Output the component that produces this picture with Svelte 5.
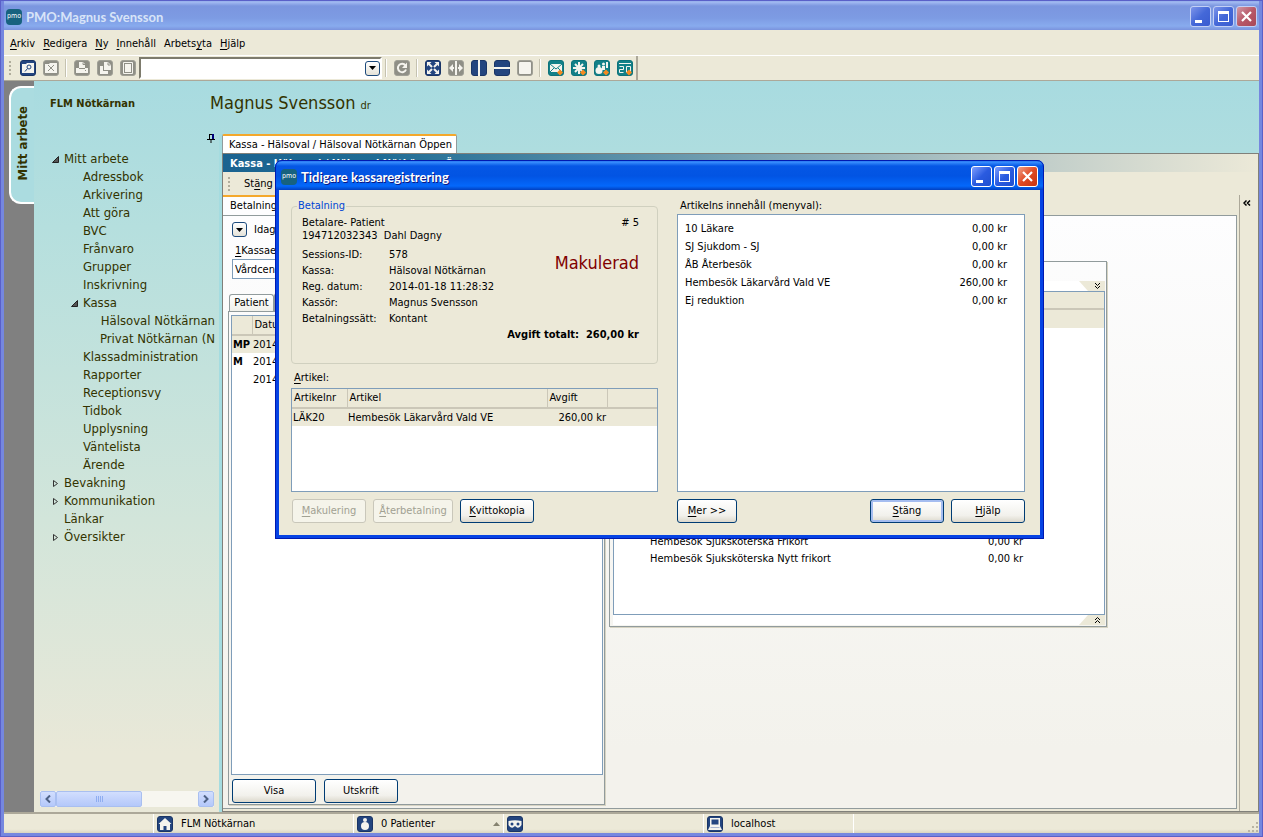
<script lang="ts">
  interface TreeNode {
    label: string;
    level: number;
    state?: "open" | "closed";
  }

  const tree: TreeNode[] = [
    { label: "Mitt arbete", level: 0, state: "open" },
    { label: "Adressbok", level: 1 },
    { label: "Arkivering", level: 1 },
    { label: "Att göra", level: 1 },
    { label: "BVC", level: 1 },
    { label: "Frånvaro", level: 1 },
    { label: "Grupper", level: 1 },
    { label: "Inskrivning", level: 1 },
    { label: "Kassa", level: 1, state: "open" },
    { label: "Hälsoval Nötkärnan", level: 2 },
    { label: "Privat Nötkärnan (N", level: 2 },
    { label: "Klassadministration", level: 1 },
    { label: "Rapporter", level: 1 },
    { label: "Receptionsvy", level: 1 },
    { label: "Tidbok", level: 1 },
    { label: "Upplysning", level: 1 },
    { label: "Väntelista", level: 1 },
    { label: "Ärende", level: 1 },
    { label: "Bevakning", level: 0, state: "closed" },
    { label: "Kommunikation", level: 0, state: "closed" },
    { label: "Länkar", level: 0 },
    { label: "Översikter", level: 0, state: "closed" },
  ];

  // [before, access key, after]
  const menus = [
    ["", "A", "rkiv"],
    ["", "R", "edigera"],
    ["", "N", "y"],
    ["", "I", "nnehåll"],
    ["Arbets", "y", "ta"],
    ["", "H", "jälp"],
  ];

  const details = [
    ["Sessions-ID:", "578"],
    ["Kassa:", "Hälsoval Nötkärnan"],
    ["Reg. datum:", "2014-01-18 11:28:32"],
    ["Kassör:", "Magnus Svensson"],
    ["Betalningssätt:", "Kontant"],
  ];

  const contents = [
    ["10 Läkare", "0,00 kr"],
    ["SJ Sjukdom - SJ", "0,00 kr"],
    ["ÅB Återbesök", "0,00 kr"],
    ["Hembesök Läkarvård Vald VE", "260,00 kr"],
    ["Ej reduktion", "0,00 kr"],
  ];

  let search = $state("");
  let enhet = $state("Vårdcent");
</script>

{#snippet icon(name: string, tone: string)}
  <svg class="icon {tone}" viewBox="0 0 16 16" width="16" height="16" aria-hidden="true">
    <rect class="base" x="0.5" y="0.5" width="15" height="15" rx="2.5" />
    {#if name === "search"}
      <path class="fill" d="M2 4h4l1 -1h7v10H2z" />
      <circle class="ink" cx="9" cy="7" r="2" />
      <path class="ink" d="M7.500 8.500L5 11.500" />
    {:else if name === "close"}
      <path class="fill" d="M2 4h4l1 -1h7v10H2z" />
      <path class="ink" d="M5 5l6 6M11 5l-6 6" />
    {:else if name === "print"}
      <path class="fill" d="M5 2h4l2 2v4h3v5H2V8h3z" />
      <path class="ink" d="M5 8.5h6M9 2.5v2h2M11 10.5h1" />
    {:else if name === "copy"}
      <path class="fill" d="M7 2h4l3 3v5H7zM3 6h3v5h5v3H3z" />
      <path class="ink" d="M11 2.5v2.5h2.5" />
    {:else if name === "page"}
      <path class="line" d="M3.5 2.5h9v11h-9z" />
      <path class="fill" d="M5 4h6v8H5z" />
    {:else if name === "reload"}
      <path class="bold" d="M11.5 5.5A4.2 4.2 0 1 0 12 9.500" />
      <path class="fill" d="M13 2.500v5.500H8z" />
    {:else if name === "expand"}
      <path class="bold" d="M4 4l8 8M12 4l-8 8" />
      <path class="fill" d="M2 2h4.500L2 6.500zM14 2v4.500L9.500 2zM2 14V9.500L6.500 14zM14 14H9.500L14 9.500z" />
      <path class="knock" d="M8 6l2 2l-2 2l-2 -2z" />
    {:else if name === "width"}
      <path class="bold" d="M3 8h10" />
      <path class="fill" d="M1 8l4 -4v8zM15 8l-4 -4v8z" />
      <path class="knock" d="M6 1h4v14H6z" />
      <path class="bold" d="M8 1v14" />
    {:else if name === "columns"}
      <path class="bold" d="M8 0v16" />
    {:else if name === "rows"}
      <path class="bold" d="M0 8h16" />
    {:else if name === "single"}
      <rect class="fill" x="2" y="2" width="12" height="12" rx="1" />
    {:else if name === "mail"}
      <path class="fill" d="M2 4h12v8H2z" />
      <path class="ink" d="M2 4l6 5l6 -5M2 12l4 -4M14 12l-4 -4" />
    {:else if name === "star"}
      <path class="bold" d="M8 2v12M2 8h12M4 4l8 8M12 4l-8 8" />
    {:else if name === "people"}
      <circle class="fill" cx="5" cy="10.500" r="3.500" />
      <circle class="fill" cx="5" cy="6" r="1.500" />
      <circle class="fill" cx="9.500" cy="4" r="1.500" />
      <path class="fill" d="M8 6h3v4H8zM12 2h2v6h-2z" />
    {:else if name === "calendar"}
      <path class="line" d="M2 3.500h12M2.500 6.500h4v3h-4v3h4M9.500 12.500v-6h4v6" />
    {:else if name === "home"}
      <path class="fill" d="M8 2l6.500 6H13v6H9.500v-4h-3v4H3V8H1.500z" />
    {:else if name === "person"}
      <circle class="fill" cx="8" cy="4" r="2" />
      <circle class="fill" cx="8" cy="10" r="4" />
    {:else if name === "mask"}
      <path class="fill" d="M1.500 5q6.500 -1.500 13 0v4q-2 3.500 -4.500 2.500l-2 -1.500l-2 1.500q-2.500 1 -4.500 -2.500z" />
      <circle class="knock" cx="5" cy="8" r="1.500" />
      <circle class="knock" cx="11" cy="8" r="1.500" />
    {:else if name === "computer"}
      <path class="fill" d="M3 2h10v8l2 4H1l2 -4z" />
      <path class="knock" d="M4.500 3.500h7v5h-7z" />
      <path class="shade" d="M3.500 11.500h9" />
    {/if}
    {#if tone === "teal"}
      <path class="badge" d="M12 9.500l3 3l-3 3l-3 -3z" />
    {/if}
  </svg>
{/snippet}

{#snippet tool(name: string, tone: string, label: string)}
  <button class="tool" aria-label={label}>{@render icon(name, tone)}</button>
{/snippet}

{#snippet logo()}
  <svg class="logo" viewBox="0 0 16 16" width="16" height="16" aria-hidden="true">
    <rect width="16" height="16" rx="4" fill="#17627f" />
    <text x="8" y="9" text-anchor="middle" font-size="7" fill="#fff">pmo</text>
  </svg>
{/snippet}

{#snippet windowButtons()}
  <div class="window-buttons">
    <button class="win" aria-label="Minimera">
      <svg viewBox="0 0 21 21"><path d="M5 14h7v3H5z" fill="#fff" /></svg>
    </button>
    <button class="win" aria-label="Maximera">
      <svg viewBox="0 0 21 21"><path d="M5 5h11v11H5zM6 8v7h9V8z" fill="#fff" fill-rule="evenodd" /></svg>
    </button>
    <button class="win close" aria-label="Stäng fönster">
      <svg viewBox="0 0 21 21"><path d="M6 6l9 9M15 6l-9 9" stroke="#fff" stroke-width="2.200" /></svg>
    </button>
  </div>
{/snippet}

{#snippet down()}
  <svg viewBox="0 0 7 4" width="7" height="4" aria-hidden="true"><path d="M0 0h7L3.500 4z" fill="#000" /></svg>
{/snippet}

<div class="window">
  <header class="titlebar">
    {@render logo()}
    <h1>PMO:Magnus Svensson</h1>
    {@render windowButtons()}
  </header>

  <nav class="menubar">
    {#each menus as [before, key, after]}
      <a href="#menu">{before}<u>{key}</u>{after}</a>
    {/each}
  </nav>

  <div class="toolbar-row">
    <div class="toolbar">
      <span class="grip"></span>
      {@render tool("search", "navy", "Sök")}
      {@render tool("close", "gray", "Stäng")}
      <span class="sep"></span>
      {@render tool("print", "gray", "Skriv ut")}
      {@render tool("copy", "gray", "Kopiera")}
      {@render tool("page", "gray", "Sida")}
      <div class="combo">
        <input aria-label="Sök" bind:value={search} />
        <button class="drop" aria-label="Visa lista">{@render down()}</button>
      </div>
      <span class="sep"></span>
      {@render tool("reload", "gray", "Uppdatera")}
      <span class="sep"></span>
      {@render tool("expand", "navy", "Expandera")}
      {@render tool("width", "gray", "Bredd")}
      {@render tool("columns", "navy", "Kolumner")}
      {@render tool("rows", "navy", "Rader")}
      {@render tool("single", "gray", "En vy")}
      <span class="sep"></span>
      {@render tool("mail", "teal", "Nytt meddelande")}
      {@render tool("star", "teal", "Ny notering")}
      {@render tool("people", "teal", "Ny grupp")}
      {@render tool("calendar", "teal", "Ny bokning")}
    </div>
  </div>

  <div class="workspace">
    <div class="strip">
      <button class="side-tab"><span>Mitt arbete</span></button>
    </div>

    <div class="main">
      <div class="user-header">
        <strong>FLM Nötkärnan</strong>
        <span class="user">Magnus Svensson <small>dr</small></span>
      </div>

      <div class="columns">
        <nav class="sidebar">
          <div class="pin-row">
            <svg viewBox="0 0 8 9" width="8" height="9" aria-hidden="true">
              <path d="M2 0.500h4M2.500 0v5M0 5.500h8M4 5v4" stroke="#000" fill="none" />
              <path d="M5 0h2v5H5z" fill="#00007a" />
            </svg>
          </div>
          <ul class="tree">
            {#each tree as node}
              <li class="level-{node.level}">
                <span class="arrow">
                  {#if node.state === "open"}
                    <svg viewBox="0 0 7 7" width="7" height="7"><path d="M6.500 0.500v6h-6z" fill="#555" stroke="#222" /></svg>
                  {:else if node.state === "closed"}
                    <svg viewBox="0 0 7 7" width="7" height="7"><path d="M1.500 0.500l4 3l-4 3z" fill="none" stroke="#333" /></svg>
                  {/if}
                </span>
                <a href="#{node.label}">{node.label}</a>
              </li>
            {/each}
          </ul>
          <div class="hscroll">
            <button aria-label="Rulla vänster"><svg viewBox="0 0 6 8" width="6" height="8"><path d="M5 0.500L1.500 4L5 7.500" /></svg></button>
            <span class="thumb"><i></i><i></i><i></i><i></i></span>
            <span class="track"></span>
            <button aria-label="Rulla höger"><svg viewBox="0 0 6 8" width="6" height="8"><path d="M1 0.500L4.500 4L1 7.500" /></svg></button>
          </div>
        </nav>

        <div class="content">
          <button class="doc-tab">Kassa - Hälsoval / Hälsoval Nötkärnan Öppen</button>
          <section class="doc">
            <h2>Kassa - Hälsoval / Hälsoval Nötkärnan Öppen</h2>
            <div class="doc-row">
              <div class="doc-main">
                <div class="doc-toolbar">
                  <span class="grip"></span>
                  <button>St<u>ä</u>ng</button>
                </div>
                <div class="page-tabs"><button>Betalning</button></div>
                <div class="page">
                  <div class="payments">
                    <div class="filter">
                      <button class="drop" aria-label="Välj period">{@render down()}</button>
                      <span>Idag</span>
                    </div>
                    <label for="enhet"><u>1</u>Kassae</label>
                    <input id="enhet" bind:value={enhet} />
                    <div class="sub-tabs">
                      <button>Patient</button>
                      <button class="active" aria-label="Dag"></button>
                    </div>
                    <div class="sub-panel">
                      <div class="list">
                        <table>
                          <thead><tr><th class="mark"></th><th>Datu</th></tr></thead>
                          <tbody>
                            <tr class="selected"><td class="mark">MP</td><td>2014</td></tr>
                            <tr><td class="mark">M</td><td>2014</td></tr>
                            <tr><td class="mark"></td><td>2014</td></tr>
                          </tbody>
                        </table>
                      </div>
                      <div class="list-actions">
                        <button class="xp wide">Visa</button>
                        <button class="xp">Utskrift</button>
                      </div>
                    </div>
                  </div>

                  <div class="articles">
                    <div class="fold top">
                      <svg viewBox="0 0 28 10" width="28" height="10" aria-hidden="true">
                        <path d="M2 0h26v10H11z" fill="#ece9d8" />
                        <path d="M18 2l2.500 2.500L23 2M18 5l2.500 2.500L23 5" fill="none" stroke="#000" />
                      </svg>
                    </div>
                    <div class="list">
                      <div class="list-head"></div>
                      <div class="list-selected"></div>
                      <dl>
                        <div><dt>Hembesök Sjuksköterska Frikort</dt><dd>0,00 kr</dd></div>
                        <div><dt>Hembesök Sjuksköterska Nytt frikort</dt><dd>0,00 kr</dd></div>
                      </dl>
                    </div>
                    <div class="fold">
                      <svg viewBox="0 0 28 10" width="28" height="10" aria-hidden="true">
                        <path d="M11 0h17v10H2z" fill="#ece9d8" />
                        <path d="M18 5l2.500 -2.500L23 5M18 8l2.500 -2.500L23 8" fill="none" stroke="#000" />
                      </svg>
                    </div>
                  </div>
                </div>
              </div>
              <aside class="collapsed">
                <button aria-label="Visa panel">
                  <svg viewBox="0 0 8 6" width="8" height="6" aria-hidden="true"><path d="M3.500 0.500L1 3l2.500 2.500M7 0.500L4.500 3L7 5.500" fill="none" stroke="#000" stroke-width="1.500" /></svg>
                </button>
              </aside>
            </div>
          </section>
        </div>
      </div>
    </div>
  </div>

  <footer class="statusbar">
    <span class="cell"></span>
    <span class="cell broad">{@render icon("home", "navy")}FLM Nötkärnan</span>
    <span class="cell">
      {@render icon("person", "navy")}0 Patienter
      <svg class="up" viewBox="0 0 7 4" width="7" height="4"><path d="M0 4h7L3.500 0z" fill="#85826f" /></svg>
    </span>
    <span class="cell broad">{@render icon("mask", "navy")}</span>
    <span class="cell">{@render icon("computer", "navy")}localhost</span>
    <span class="fill-cell">
      <svg viewBox="0 0 11 11" width="11" height="11" aria-hidden="true">
        <path d="M8 0h2v2H8zM4 4h2v2H4zM8 4h2v2H8zM0 8h2v2H0zM4 8h2v2H4zM8 8h2v2H8z" fill="#b8b4a2" />
      </svg>
    </span>
  </footer>

  <div class="dialog" role="dialog" aria-labelledby="dialog-title">
    <header class="titlebar active">
      {@render logo()}
      <h2 id="dialog-title">Tidigare kassaregistrering</h2>
      {@render windowButtons()}
    </header>
    <div class="dialog-body">
      <div class="left">
        <fieldset>
          <legend>Betalning</legend>
          <div class="payer">
            <p>Betalare- Patient<br />194712032343&nbsp; Dahl Dagny</p>
            <span class="number"># 5</span>
          </div>
          <div class="info">
            <dl>
              {#each details as [name, value]}
                <dt>{name}</dt>
                <dd>{value}</dd>
              {/each}
            </dl>
            <span class="voided">Makulerad</span>
          </div>
          <p class="total">Avgift totalt:&nbsp; 260,00 kr</p>
        </fieldset>
        <span class="caption" id="artikel"><u>A</u>rtikel:</span>
        <div class="list article-list">
          <table aria-labelledby="artikel">
            <thead>
              <tr><th class="nr">Artikelnr</th><th class="name">Artikel</th><th class="fee">Avgift</th><th></th></tr>
            </thead>
            <tbody>
              <tr class="selected"><td>LÄK20</td><td>Hembesök Läkarvård Vald VE</td><td class="amount">260,00 kr</td><td></td></tr>
            </tbody>
          </table>
        </div>
        <div class="buttons">
          <button class="xp" disabled><u>M</u>akulering</button>
          <button class="xp refund" disabled><u>Å</u>terbetalning</button>
          <button class="xp receipt"><u>K</u>vittokopia</button>
        </div>
      </div>
      <div class="right">
        <span class="caption">Artikelns innehåll (menyval):</span>
        <dl class="list contents">
          {#each contents as [name, price]}
            <div><dt>{name}</dt><dd>{price}</dd></div>
          {/each}
        </dl>
        <div class="buttons">
          <button class="xp more"><u>M</u>er &gt;&gt;</button>
          <button class="xp default"><u>S</u>täng</button>
          <button class="xp"><u>H</u>jälp</button>
        </div>
      </div>
    </div>
  </div>
</div>

<style>
  :global(body) { margin: 0; }

  * { box-sizing: border-box; }

  .window {
    position: relative;
    display: flex;
    flex-direction: column;
    min-height: 100vh;
    overflow: hidden;
    border: solid #7587df;
    border-width: 0 4px 4px;
    outline: 1px solid #5a60c8;
    outline-offset: -1px;
    background: #ece9d8;
    color: #000;
    font: 11px/14px Tahoma, "DejaVu Sans Condensed", "DejaVu Sans", sans-serif;
    white-space: nowrap;
  }

  h1, h2, p, dl, dd, ul { margin: 0; padding: 0; }
  a { color: inherit; text-decoration: none; }
  button, input { font: inherit; color: inherit; }
  button { border: 0; padding: 0; background: none; }
  u { text-underline-offset: 2px; }

  /* title bars */
  .titlebar {
    display: flex;
    align-items: center;
    gap: 4px;
    height: 30px;
    margin: 0 -4px;
    padding: 3px 6px 0;
    border-radius: 7px 7px 0 0;
    background: linear-gradient(#7a96df 0, #a3bbf2 2px, #7b96df 6px, #7d9be3 18px, #88abee 26px, #7a93dd 30px);
    color: #d8e4f8;
  }

  .titlebar.active {
    background: linear-gradient(#0a4bd8 0, #3a90ff 2px, #0557e5 6px, #0254e3 16px, #0468fb 26px, #0240c0 30px);
    color: #fff;
    text-shadow: 1px 1px #0a1883;
  }

  .titlebar h1, .titlebar h2 {
    flex: 1;
    font: 700 13px/18px "Trebuchet MS", Lato, sans-serif;
  }

  .logo { font-family: "DejaVu Sans Condensed", sans-serif; text-shadow: none; }
  .window-buttons { display: flex; gap: 2px; }

  .win {
    width: 21px;
    height: 21px;
    border: 1px solid #fff;
    border-radius: 3px;
    background: linear-gradient(135deg, #7f9fff, #2a5be0 50%, #1f4fd0);
  }

  .win svg { display: block; margin: -1px; width: 21px; height: 21px; }
  .win.close { background: linear-gradient(135deg, #f0a088, #e04a24 50%, #c83410); }
  .titlebar:not(.active) .win { border-color: #c3d0f5; background: linear-gradient(135deg, #7d95ea, #4468d8 50%, #3a5cd0); }
  .titlebar:not(.active) .win.close { background: linear-gradient(135deg, #d09aa8, #b85868 50%, #a84858); }

  /* menu and toolbar */
  .menubar {
    display: flex;
    gap: 8px;
    height: 25px;
    padding: 7px 6px 4px;
  }

  .toolbar-row { border-top: 1px solid #fff; border-bottom: 1px solid #aca899; }

  .toolbar {
    display: flex;
    align-items: center;
    width: fit-content;
    height: 24px;
    border-right: 2px solid #aca899;
  }

  .tool { display: grid; place-items: center; width: 23px; height: 23px; }
  .sep { width: 2px; height: 18px; margin: 0 3px; border-left: 1px solid #c5c2b0; border-right: 1px solid #fff; }

  .grip {
    width: 2px;
    height: 14px;
    margin: 0 5px;
    background: repeating-linear-gradient(#b0ad9c 0 2px, transparent 2px 4px);
  }

  .icon .base { fill: #23457f; stroke: #1a3566; }
  .icon.gray .base { fill: #8f8f86; stroke: #a0a096; }
  .icon.teal .base { fill: #128088; stroke: #0d737b; }
  .icon .fill { fill: #f5f4ee; }
  .icon .line { fill: none; stroke: #f5f4ee; }
  .icon .bold { fill: none; stroke: #f5f4ee; stroke-width: 2; }
  .icon .ink { fill: none; stroke: #23457f; }
  .icon.gray .ink { stroke: #8f8f86; }
  .icon.teal .ink { stroke: #128088; }
  .icon .knock { fill: #23457f; }
  .icon .shade { stroke: #a9b6cf; }
  .icon.gray .knock { fill: #8f8f86; }
  .icon .badge { fill: #f58a1f; }

  .combo {
    display: flex;
    align-items: center;
    width: 243px;
    height: 22px;
    border: 2px solid #fff;
    border-top-color: #7d7b6d;
    border-left-color: #7d7b6d;
    background: #fff;
  }

  .combo input { flex: 1; min-width: 0; border: 0; outline: 0; background: none; }

  .drop {
    display: grid;
    place-items: center;
    width: 15px;
    height: 15px;
    border: 1px solid #1c4a7c;
    border-radius: 3px;
    background: linear-gradient(#fff, #e4e2d8);
  }

  /* workspace */
  .workspace { display: flex; flex: 1; }
  .strip { width: 30px; padding: 5px 0 0 5px; background: #808080; }

  .side-tab {
    width: 25px;
    height: 118px;
    border: 2px solid #fff;
    border-right: 0;
    border-radius: 12px 0 0 12px;
    background: #abdce0;
    color: #333300;
    font-size: 13px;
    font-weight: 700;
  }

  .side-tab span { writing-mode: vertical-rl; transform: rotate(180deg); }

  .main {
    display: flex;
    flex: 1;
    flex-direction: column;
    min-width: 0;
    background: linear-gradient(#a8dbe0, #b5dfde 20%, #d2e5da 60%, #e9e8d8 92%);
  }

  .user-header {
    display: flex;
    align-items: center;
    height: 53px;
    padding: 0 0 7px 16px;
    color: #333300;
  }

  .user-header strong { width: 160px; font-size: 11px; }
  .user { font-size: 18px; line-height: 20px; }
  .user small { font-size: 11px; }

  .columns { display: flex; flex: 1; }

  .sidebar {
    display: flex;
    flex-direction: column;
    width: 188px;
    padding-left: 6px;
    border-right: 3px solid #a5dce0;
  }

  .pin-row { display: flex; justify-content: flex-end; height: 16px; padding-right: 4px; }
  .tree { flex: 1; margin-right: 4px; overflow: hidden; list-style: none; color: #333300; font-size: 13px; }
  .tree li { display: flex; height: 18px; line-height: 18px; padding-left: 12px; }
  .tree .level-1 { padding-left: 31px; }
  .tree .level-2 { padding-left: 50px; }
  .arrow { display: flex; align-items: center; width: 12px; }

  .hscroll { display: flex; height: 16px; margin: 0 5px 5px 0; background: #f7f6f0; }

  .hscroll button, .thumb {
    display: flex;
    align-items: center;
    justify-content: center;
    width: 16px;
    border: 1px solid #a9bff0;
    border-radius: 2px;
    background: linear-gradient(#d2defe, #b4c8fa);
  }

  .hscroll path { fill: none; stroke: #4d6185; stroke-width: 2; }
  .thumb { flex: 0 0 86px; gap: 1px; }
  .thumb i { width: 1px; height: 6px; background: #8fadf0; }
  .track { flex: 1; }

  .content { display: flex; flex: 1; flex-direction: column; align-items: flex-start; min-width: 0; }

  .doc-tab {
    height: 19px;
    padding: 0 4px 0 6px;
    border: 1px solid #919b9c;
    border-top: 2px solid #f4a82c;
    border-bottom: 0;
    border-radius: 2px 2px 0 0;
    background: #fff;
  }

  .doc {
    display: flex;
    flex: 1;
    flex-direction: column;
    align-self: stretch;
    border: 1px solid #80807a;
    background: #ece9d8;
  }

  .doc h2 {
    height: 18px;
    padding-left: 7px;
    background: linear-gradient(90deg, #1a6390, #1f6c95 15%, #c3cfca 80%, #ece9d8);
    color: #fff;
    font-size: 11px;
    line-height: 20px;
  }

  .doc-row { display: flex; flex: 1; }
  .doc-main { display: flex; flex: 1; flex-direction: column; min-width: 0; }
  .doc-toolbar { display: flex; align-items: center; gap: 9px; height: 23px; }
  .page-tabs { height: 20px; }

  .page-tabs button {
    height: 20px;
    padding: 0 7px;
    border-top: 2px solid #f4a82c;
    background: #fdfdfe;
  }

  .page {
    display: flex;
    flex: 1;
    gap: 4px;
    align-items: stretch;
    margin: 0 2px 2px 0;
    padding: 0 0 3px 5px;
    border: solid #919b9c;
    border-width: 1px 1px 1px 0;
    background: linear-gradient(#fdfdfe, #f3f2ec 90%);
  }

  .payments { display: flex; flex-direction: column; width: 377px; }
  .filter { display: flex; align-items: center; gap: 7px; height: 27px; padding-left: 4px; }
  .payments label { height: 16px; padding-left: 7px; line-height: 16px; }

  .payments input {
    height: 20px;
    margin: 0 4px 15px;
    padding: 0 2px;
    border: 1px solid #7f9db9;
    background: #fff;
  }

  .sub-tabs { display: flex; height: 17px; }

  .sub-tabs button {
    width: 45px;
    margin-left: 1px;
    border: 1px solid #919b9c;
    border-bottom: 0;
    border-radius: 3px 3px 0 0;
    background: linear-gradient(#fff, #f0f0ea);
  }

  .sub-tabs .active { margin: -1px 0 0; border-top: 2px solid #f4a82c; }

  .sub-panel {
    display: flex;
    flex: 1;
    flex-direction: column;
    padding: 3px 1px 1px 2px;
    border: 1px solid #919b9c;
    box-shadow: 1px 1px #d6d3c2;
  }

  .list { border: 1px solid #7f9db9; background: #fff; }
  .sub-panel .list { flex: 1; }
  .list-actions { display: flex; gap: 8px; padding: 4px 0 0 1px; }

  table { width: 100%; border-collapse: collapse; table-layout: fixed; }
  td, th { padding: 0 2px; text-align: left; font-weight: 400; height: 18px; }
  th { height: 19px; background: #ece9d8; border-bottom: 2px solid #cbc7b8; }
  td.mark { font-weight: 700; }
  th.mark { width: 20px; border-right: 1px solid #cbc7b8; }
  .selected td { background: #ece9d8; }
  .payments td { padding: 0 1px; }

  .articles {
    display: flex;
    flex: 0 0 498px;
    flex-direction: column;
    align-self: flex-start;
    height: 366px;
    margin-top: 45px;
    padding: 19px 1px 1px 3px;
    border: 1px solid #919b9c;
    box-shadow: 1px 1px #d6d3c2;
  }

  .fold { display: flex; justify-content: flex-end; height: 10px; background: #fff; }
  .articles .list { display: flex; flex: 1; flex-direction: column; }
  .list-head, .list-selected { height: 18px; background: #ece9d8; }
  .list-head { border-bottom: 2px solid #cbc7b8; }
  .articles dl { display: grid; margin-top: auto; padding: 0 81px 47px 36px; }
  .articles dl div { display: flex; justify-content: space-between; height: 17px; line-height: 17px; }

  .collapsed { width: 19px; margin-top: 23px; padding: 1px 0 0 3px; border-left: 1px solid #aca899; }

  /* status bar */
  .statusbar {
    display: flex;
    height: 21px;
    border-top: 2px solid #aca899;
    background: linear-gradient(#ece9d8 80%, #d8d5c0);
  }

  .cell {
    display: flex;
    align-items: center;
    gap: 8px;
    width: 150px;
    padding: 0 3px;
    border-right: 1px solid #fff;
  }

  .cell.broad { width: 200px; }
  .up { margin-left: auto; }
  .fill-cell { display: flex; flex: 1; align-items: flex-end; justify-content: flex-end; }

  /* XP push buttons */
  .xp {
    width: 74px;
    height: 24px;
    border: 1px solid #003c74;
    border-radius: 3px;
    background: linear-gradient(#fff, #f2f1ec 70%, #dcd8cc);
  }

  .xp.wide { width: 84px; }
  .xp.default { box-shadow: inset 0 0 0 2px #a5bdf0; }
  .xp:disabled { border-color: #c9c7ba; background: #f5f4ea; color: #a1a192; }

  /* dialog */
  .dialog {
    position: absolute;
    top: 160px;
    left: 271px;
    width: 769px;
    border: solid #0543e4;
    border-width: 0 4px 4px;
    border-radius: 7px 7px 0 0;
    outline: 1px solid #0019b0;
    outline-offset: -1px;
    background: #ece9d8;
  }

  .dialog-body { display: flex; gap: 19px; height: 345px; padding: 8px 15px 12px 12px; }
  .left, .right { display: flex; flex-direction: column; }
  .left { width: 367px; }
  .right { flex: 1; }

  fieldset {
    height: 166px;
    margin: 0;
    padding: 0 18px 0 10px;
    border: 1px solid #d0d0bf;
    border-radius: 4px;
  }

  legend { margin-left: -5px; padding: 0 1px; color: #0046d5; line-height: 16px; }
  .payer { display: flex; justify-content: space-between; line-height: 13px; padding-top: 2px; }
  .info { display: flex; justify-content: space-between; padding-top: 5px; }
  .info dl { display: grid; grid-template-columns: 87px auto; line-height: 16px; }
  .voided { padding-top: 3px; color: #800000; font-size: 18px; line-height: 26px; }
  .total { font-weight: 700; text-align: right; line-height: 16px; }

  .caption { height: 16px; padding-left: 3px; line-height: 16px; }
  .left .caption { margin-top: 6px; height: 18px; }
  .article-list { flex: 1; }
  .article-list th { padding-left: 2px; }
  .article-list td { padding-left: 1px; }
  .article-list .nr { width: 55px; }
  .article-list .name { width: 200px; }
  .article-list .fee { width: 60px; }
  .article-list th:not(:last-child) { border-right: 1px solid #cbc7b8; }
  .article-list .amount { padding: 0 1px; text-align: right; }

  .contents { flex: 1; padding: 5px 17px 0 7px; }
  .contents div { display: flex; justify-content: space-between; height: 18px; line-height: 18px; }

  .buttons { display: flex; gap: 7px; padding-top: 7px; height: 31px; }
  .left .buttons { padding-left: 1px; }
  .refund { width: 80px; }
  .more { width: 60px; margin-right: auto; }
</style>
